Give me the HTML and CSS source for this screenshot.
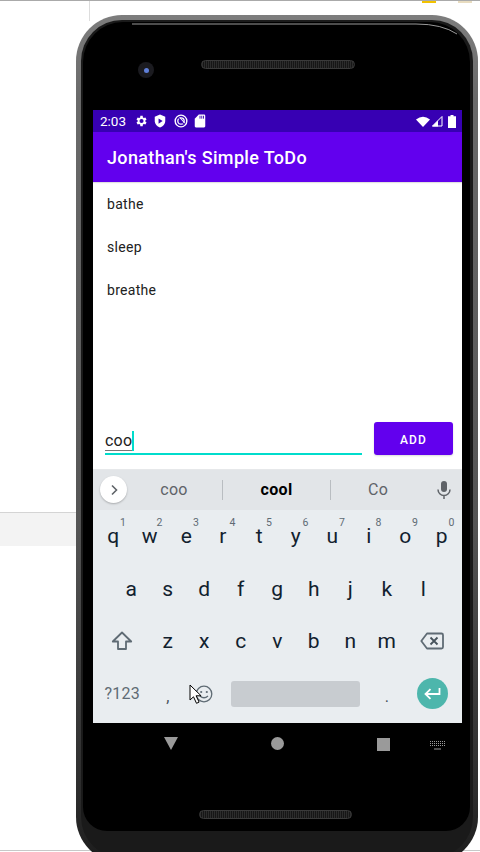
FILE: index.html
```html
<!DOCTYPE html>
<html lang="en">
<head>
<meta charset="utf-8">
<title>Jonathan's Simple ToDo</title>
<link rel="stylesheet" href="styles.css">
</head>
<body>
<div class="desktop">
  <div class="top-rule"></div>
  <div class="top-mark mark-yellow"></div>
  <div class="top-mark mark-beige"></div>
  <div class="side-rule"></div>
  <div class="side-band"></div>
  <div class="bottom-rule"></div>

  <div class="phone">
    <div class="bezel"></div>
    <svg class="glare" width="402" height="60" viewBox="0 0 402 60"><path d="M56 9H340Q366 9 381 19" fill="none" stroke="#9a9a9a" stroke-width="1"/></svg>
    <div class="camera"><span class="lens"></span></div>
    <div class="speaker speaker-top"></div>
    <div class="speaker speaker-bottom"></div>

    <div class="screen">
      <div class="status">
        <span class="time">2:03</span>
        <svg class="st-ic" width="14" height="14" viewBox="0 0 24 24"><path fill="#fff" d="M19.4 13a7.500 7.500 0 0 0 0-2l2.100-1.600-2-3.500-2.500 1a7.500 7.500 0 0 0-1.700-1L14.900 3.200h-4l-.4 2.700a7.500 7.500 0 0 0-1.700 1l-2.500-1-2 3.500L6.400 11a7.500 7.500 0 0 0 0 2l-2.100 1.600 2 3.500 2.500-1a7.500 7.500 0 0 0 1.700 1l.4 2.700h4l.4-2.700a7.500 7.500 0 0 0 1.700-1l2.500 1 2-3.500zM12.900 15.500a3.500 3.500 0 1 1 0-7 3.500 3.500 0 0 1 0 7z"/></svg>
        <svg class="st-ic" width="14" height="14" viewBox="0 0 24 24"><path fill="#fff" d="M12 1 3 4.500v7C3 17 6.800 21.500 12 23c5.200-1.500 9-6 9-11.500v-7z"/><path fill="#3700b3" d="M9.500 7.500v9l7-4.500z"/></svg>
        <svg class="st-ic st-wide" width="14" height="14" viewBox="0 0 24 24"><circle cx="12" cy="12" r="10" fill="none" stroke="#fff" stroke-width="2.400"/><circle cx="12" cy="12" r="5.500" fill="none" stroke="#fff" stroke-width="2.200"/><path d="M8 7l9 10" stroke="#3700b3" stroke-width="2"/><path d="M10 6l8 9" stroke="#fff" stroke-width="1.800"/></svg>
        <svg class="st-ic" width="14" height="14" viewBox="0 0 24 24"><path fill="#fff" d="M10 1h9a2 2 0 0 1 2 2v18a2 2 0 0 1-2 2H5a2 2 0 0 1-2-2V8z"/><path stroke="#3700b3" stroke-width="1.500" d="M12 3v5M15 3v5M18 3v5"/></svg>
        <span class="st-space"></span>
        <svg class="st-wifi" width="14" height="11" viewBox="0 0 14 11"><path fill="#fff" d="M0 3.500Q7-2 14 3.500L7 11z"/></svg>
        <svg class="st-signal" width="12" height="12" viewBox="0 0 12 12"><path fill="none" stroke="#fff" stroke-width="1" d="M11 1.500V11H1.500z"/><path fill="#fff" d="M1 11.500 7 5.500v6z"/></svg>
        <svg class="st-batt" width="8" height="13" viewBox="0 0 8 13"><path fill="#fff" d="M2.500 0h3v1.200H8V13H0V1.200h2.500z"/></svg>
      </div>
      <div class="appbar">Jonathan's Simple ToDo</div>
      <div class="list">
        <div class="item">bathe</div>
        <div class="item">sleep</div>
        <div class="item">breathe</div>
      </div>
      <div class="entry">
        <div class="field"><span class="typed">coo</span><span class="caret"></span></div>
        <div class="add">ADD</div>
      </div>
      <div class="keyboard">
        <div class="suggest">
          <div class="chev"><svg width="10" height="12" viewBox="0 0 10 12"><path d="M3 1.500 7.500 6 3 10.500" fill="none" stroke="#5f6368" stroke-width="1.600"/></svg></div>
          <div class="sug sug-a">coo</div>
          <div class="sug sug-b">cool</div>
          <div class="sug sug-c">Co</div>
          <svg class="mic" width="14" height="20" viewBox="0 0 14 20"><rect x="4" y="1" width="6" height="11" rx="3" fill="#5f6368"/><path d="M1 9.500a6 6 0 0 0 12 0M7 15.500V19" fill="none" stroke="#5f6368" stroke-width="1.500"/></svg>
        </div>
        <div class="row row-top">
          <div class="key">q<i>1</i></div><div class="key">w<i>2</i></div><div class="key">e<i>3</i></div><div class="key">r<i>4</i></div><div class="key">t<i>5</i></div><div class="key">y<i>6</i></div><div class="key">u<i>7</i></div><div class="key">i<i>8</i></div><div class="key">o<i>9</i></div><div class="key">p<i>0</i></div>
        </div>
        <div class="row row-mid">
          <div class="key">a</div><div class="key">s</div><div class="key">d</div><div class="key">f</div><div class="key">g</div><div class="key">h</div><div class="key">j</div><div class="key">k</div><div class="key">l</div>
        </div>
        <div class="row row-low">
          <div class="key wide"><svg width="22" height="20" viewBox="0 0 22 20"><path d="M11 1.500 1.800 10.500H7v7.500h8v-7.500h5.200z" fill="none" stroke="#5f6b74" stroke-width="1.800" stroke-linejoin="round"/></svg></div>
          <div class="key">z</div><div class="key">x</div><div class="key">c</div><div class="key">v</div><div class="key">b</div><div class="key">n</div><div class="key">m</div>
          <div class="key wide"><svg width="24" height="18" viewBox="0 0 24 18"><path d="M7 1.500h14.500a1.500 1.500 0 0 1 1.500 1.500v12a1.500 1.500 0 0 1-1.500 1.500H7L1.300 9z" fill="none" stroke="#5f6b74" stroke-width="1.800" stroke-linejoin="round"/><path d="M10.500 5.500l7 7M17.500 5.500l-7 7" stroke="#46525b" stroke-width="1.800"/></svg></div>
        </div>
        <div class="row row-bottom">
          <div class="key wide sym">?123</div>
          <div class="key punct">,</div>
          <div class="key"><svg width="18" height="18" viewBox="0 0 18 18"><circle cx="9" cy="9" r="7.800" fill="none" stroke="#5f6b74" stroke-width="1.300"/><circle cx="6.200" cy="7" r="1.100" fill="#5f6b74"/><circle cx="11.800" cy="7" r="1.100" fill="#5f6b74"/><path d="M5 11q4 3.500 8 0" fill="none" stroke="#5f6b74" stroke-width="1.300"/></svg></div>
          <div class="space"></div>
          <div class="key punct">.</div>
          <div class="key wide"><div class="enter"><svg width="18" height="14" viewBox="0 0 18 14"><path d="M16.500 1v6H3M7.500 2.200 2.500 7l5 4.800" fill="none" stroke="#fff" stroke-width="1.800"/></svg></div></div>
        </div>
      </div>
    </div>

    <div class="nav">
      <span class="nav-back"></span>
      <span class="nav-home"></span>
      <span class="nav-recent"></span>
      <svg class="nav-kb" width="15" height="9" viewBox="0 0 15 9"><path stroke="#9a9a9a" stroke-width="1" stroke-dasharray="1 1" d="M0 .5h15M0 2.500h15M0 4.500h15"/><path stroke="#9a9a9a" d="M4 8h7"/></svg>
    </div>
  </div>

  <svg class="pointer" width="14" height="21" viewBox="0 0 14 21"><path d="M1 1v15l3.500-3.200 3 6.500 2.600-1.200-3-6.300h5z" fill="#fff" stroke="#000" stroke-width="1"/></svg>
</div>
</body>
</html>
```

FILE: styles.css
```css
* { box-sizing: border-box; }
html, body { margin: 0; padding: 0; }
body { background: #fff; font-family: Roboto, "Liberation Sans", sans-serif; overflow: hidden; }
.desktop { position: relative; width: 480px; height: 852px; overflow: hidden; background: #fff; }

.top-rule { position: absolute; left: 0; top: 0; width: 480px; height: 1px; background: #aaa; }
.top-mark { position: absolute; top: 1px; height: 2px; width: 14px; }
.mark-yellow { left: 422px; background: #f2c200; }
.mark-beige { left: 458px; background: #e8dcc0; }
.side-rule { position: absolute; left: 89px; top: 1px; width: 1px; height: 20px; background: #ddd; }
.side-band { position: absolute; left: 0; top: 512px; width: 80px; height: 34px; background: #f3f3f3; border-top: 1px solid #d4d4d4; }
.bottom-rule { position: absolute; left: 0; top: 850px; width: 480px; height: 1px; background: #c8c8c8; }

.phone {
  position: absolute; left: 76px; top: 15px; width: 402px; height: 848px;
  padding: 90px 11px 0 12px;
  border: 5px solid transparent;
  border-radius: 46px;
  background:
    linear-gradient(#1a1a1a, #1a1a1a) padding-box,
    linear-gradient(#7d7d7d, #6a6a6a 10%, #555 60%, #2c2c2c 92%, #1c1c1c) border-box;
  display: flex; flex-direction: column;
}
.bezel { position: absolute; left: 2px; top: 2px; right: 3px; height: 809px; background: #000; border-radius: 40px 40px 24px 24px; }
.glare { position: absolute; left: -5px; top: -5px; }
.camera { position: absolute; left: 57px; top: 42px; width: 16px; height: 16px; border-radius: 50%; background: #1b1b20; display: flex; align-items: center; justify-content: center; }
.lens { width: 5px; height: 5px; border-radius: 50%; background: #5f7fd8; }
.speaker { position: absolute; height: 9px; border-radius: 5px; background: repeating-linear-gradient(90deg, #2c2c2c 0 1px, #161616 1px 2px); border: 1px solid #3a3a3a; }
.speaker-top { left: 120px; top: 40px; width: 154px; }
.speaker-bottom { left: 118px; top: 790px; width: 153px; }

.screen { width: 369px; height: 613px; background: #fff; display: flex; flex-direction: column; flex: none; position: relative; }
.status { height: 22px; background: #3700b3; display: flex; align-items: center; padding: 0 6px 0 7px; color: #fff; flex: none; }
.time { font-size: 13.500px; margin-right: 9px; width: 25px; }
.st-ic { margin-right: 5px; }
.st-ic:nth-of-type(2) { margin-right: 7px; }
.st-wide { margin-right: 5px; }
.st-space { flex: 1; }
.st-wifi { margin-right: 1px; }
.st-signal { margin-right: 5px; }
.appbar { height: 50px; flex: none; background: #6200ee; color: #fff; font-size: 18px; font-weight: 500; line-height: 52px; padding-left: 14px; letter-spacing: .35px; box-shadow: 0 1px 1px rgba(0,0,0,.12); }
.list { flex: 1; }
.item { height: 43px; padding-left: 14px; font-size: 14px; line-height: 44px; color: #212121; letter-spacing: .3px; }
.entry { flex: none; height: 47px; display: flex; align-items: flex-start; padding: 0 9px 0 12px; justify-content: space-between; }
.field { width: 257px; height: 33px; border-bottom: 2px solid #00dccc; display: flex; align-items: center; padding-top: 7px; }
.typed { font-size: 16px; line-height: 18px; color: #222; border-bottom: 1px solid #777; letter-spacing: .2px; }
.caret { width: 2px; height: 20px; background: #00dccc; }
.add { width: 79px; height: 33px; padding-top: 2px; border-radius: 3px; background: #6200ee; color: #fff; font-size: 12px; font-weight: 500; letter-spacing: 1.100px; display: flex; align-items: center; justify-content: center; box-shadow: 0 1px 2px rgba(0,0,0,.15); }

.keyboard { height: 254px; flex: none; background: #e9edf0; border-top: 1px solid #e6e8ea; display: flex; flex-direction: column; color: #11212e; }
.suggest { height: 40px; flex: none; background: #e2e5e8; position: relative; display: flex; align-items: center; }
.chev { position: absolute; left: 7px; top: 6px; width: 27px; height: 27px; border-radius: 50%; background: #fff; box-shadow: 0 1px 2px rgba(0,0,0,.25); display: flex; align-items: center; justify-content: center; }
.sug { position: absolute; top: 10px; font-size: 16px; line-height: 20px; text-align: center; color: #5f6368; letter-spacing: .3px; }
.sug-a { left: 29px; width: 101px; padding-left: 4px; border-right: 1px solid #b9bdc1; }
.sug-b { left: 130px; width: 108px; color: #000; font-weight: 700; border-right: 1px solid #b9bdc1; }
.sug-c { left: 239px; width: 92px; }
.mic { position: absolute; left: 344px; top: 10px; }

.row { height: 52.500px; flex: none; display: flex; padding: 0 2px; }
.row-mid { padding: 0 20px; }
.key { flex: 0 0 36.500px; position: relative; display: flex; align-items: center; justify-content: center; font-size: 21px; }
.key i { position: absolute; left: 25px; top: 7px; font-style: normal; font-size: 10.500px; line-height: 12px; color: #5f6b74; }
.wide { flex: 0 0 54.500px; }
.sym { font-size: 16px; color: #5f6b74; letter-spacing: .3px; }
.row-bottom .sym { font-size: 16px; }
.punct { font-size: 16px; color: #46525b; padding-top: 6px; }
.space { width: 129px; height: 26px; margin: 13px 8.500px 0 8.500px; background: #c8ccd0; border-radius: 3px; flex: none; }
.enter { width: 31px; height: 31px; border-radius: 50%; background: #4db6ac; display: flex; align-items: center; justify-content: center; }

.nav { position: relative; flex: none; height: 42px; }
.nav-back { position: absolute; left: 71px; top: 14px; width: 0; height: 0; border-left: 7.500px solid transparent; border-right: 7.500px solid transparent; border-top: 13px solid #9a9a9a; }
.nav-home { position: absolute; left: 178px; top: 14px; width: 13px; height: 13px; border-radius: 50%; background: #9a9a9a; }
.nav-recent { position: absolute; left: 284px; top: 15px; width: 13px; height: 13px; background: #9a9a9a; }
.nav-kb { position: absolute; left: 337px; top: 18px; }

.pointer { position: absolute; left: 189px; top: 684px; }
```
